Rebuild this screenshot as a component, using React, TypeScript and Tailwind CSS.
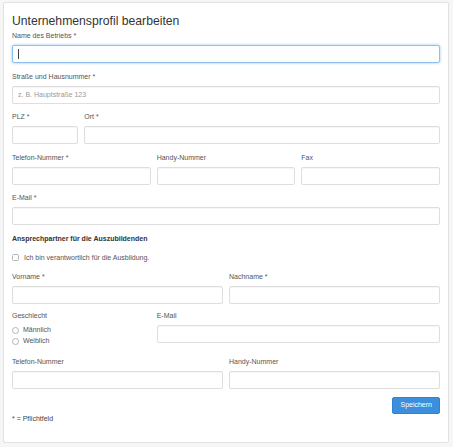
import React from "react";

const font = { fontFamily: '"Liberation Sans", Arial, sans-serif' };

function Label({ children, className = "" }: { children: React.ReactNode; className?: string }) {
  return <div className={`text-[7px] leading-[10px] text-[#555] mb-[4px] ${className}`}>{children}</div>;
}

function Input({ placeholder, focused = false }: { placeholder?: string; focused?: boolean }) {
  return (
    <div className="relative">
      <input
        placeholder={placeholder}
        className={`block w-full h-[18px] rounded-[2px] border bg-white px-[5px] text-[7px] text-[#555] placeholder:text-[#999] outline-none ${
          focused
            ? "border-[#8fc1ec] shadow-[0_0_3px_rgba(102,175,233,0.7)]"
            : "border-[#dedede] shadow-[inset_0_1px_1px_rgba(0,0,0,0.04)]"
        }`}
      />
      {focused && (
        <span className="pointer-events-none absolute left-[6px] top-[4px] w-px h-[10px] bg-[#444]" />
      )}
    </div>
  );
}

function Field({ label, placeholder, focused, className = "" }: { label: string; placeholder?: string; focused?: boolean; className?: string }) {
  return (
    <div className={className}>
      <Label>{label}</Label>
      <Input placeholder={placeholder} focused={focused} />
    </div>
  );
}

function Radio({ label }: { label: string }) {
  return (
    <div className="flex items-center gap-[4px] h-[11px]">
      <span className="w-[7px] h-[7px] rounded-full border border-[#b5b5b5] bg-white" />
      <span className="text-[7px] leading-[10px] text-[#555]">{label}</span>
    </div>
  );
}

export default function App() {
  return (
    <div className="w-[453px] h-[447px] bg-[#f6f6f6] pt-[2px] pl-[3px]" style={font}>
      <div className="w-[446px] h-[441px] rounded-[2px] border border-[#e2e2e2] bg-white px-[8px] pt-[10px]">
        <h3 className="text-[12.2px] leading-[16px] text-[#333] mb-[2px]">Unternehmensprofil bearbeiten</h3>

        {/* Betrieb */}
        <div className="flex flex-col gap-[8.5px]">
          <Field label="Name des Betriebs *" focused />
          <Field label="Straße und Hausnummer *" placeholder="z. B. Hauptstraße 123" />
          <div className="grid grid-cols-12 gap-x-[6px]">
            <Field label="PLZ *" className="col-span-2" />
            <Field label="Ort *" className="col-span-10" />
          </div>
          <div className="grid grid-cols-12 gap-x-[6px]">
            <Field label="Telefon-Nummer *" className="col-span-4" />
            <Field label="Handy-Nummer" className="col-span-4" />
            <Field label="Fax" className="col-span-4" />
          </div>
          <Field label="E-Mail *" />
        </div>

        {/* Ansprechpartner */}
        <div className="mt-[9px] text-[7px] leading-[10px] font-bold text-[#333]">
          Ansprechpartner für die Auszubildenden
        </div>
        <label className="mt-[8.5px] flex items-center gap-[5px] h-[10px]">
          <span className="w-[7px] h-[7px] rounded-[1.5px] border border-[#b5b5b5] bg-white" />
          <span className="text-[7px] leading-[10px] text-[#555]">Ich bin verantwortlich für die Ausbildung.</span>
        </label>

        <div className="mt-[9px] grid grid-cols-12 gap-x-[6px]">
          <Field label="Vorname *" className="col-span-6" />
          <Field label="Nachname *" className="col-span-6" />
        </div>

        <div className="mt-[7px] grid grid-cols-12 gap-x-[6px]">
          <div className="col-span-4">
            <Label>Geschlecht</Label>
            <div className="mt-[2px]">
              <Radio label="Männlich" />
              <Radio label="Weiblich" />
            </div>
          </div>
          <Field label="E-Mail" className="col-span-8" />
        </div>

        <div className="mt-[10px] grid grid-cols-12 gap-x-[6px]">
          <Field label="Telefon-Nummer" className="col-span-6" />
          <Field label="Handy-Nummer" className="col-span-6" />
        </div>

        <div className="mt-[8px] flex justify-end">
          <button className="h-[17px] px-[7px] rounded-[2px] border border-[#2f83d0] bg-[#3b8fdc] text-[7px] text-white">
            Speichern
          </button>
        </div>
        <div className="text-[7px] leading-[10px] text-[#444]">* = Pflichtfeld</div>
      </div>
    </div>
  );
}
